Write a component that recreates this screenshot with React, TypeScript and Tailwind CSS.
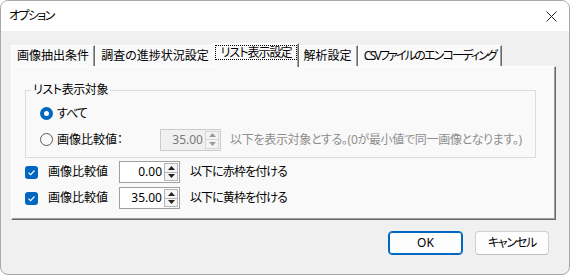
import React from "react";

const Tri = ({ up, color = "#000" }: { up: boolean; color?: string }) => (
  <svg width="7" height="4" viewBox="0 0 7 4">
    {up ? <polygon points="0,4 7,4 3.5,0" fill={color} /> : <polygon points="0,0 7,0 3.5,4" fill={color} />}
  </svg>
);

function Spin({ value, disabled }: { value: string; disabled?: boolean }) {
  return (
    <div
      className={`w-[61px] h-[22px] border flex items-center ${
        disabled ? "bg-[#f0f0f0] border-[#cccccc] text-[#7a7a7a]" : "bg-white border-[#a0a0a0] text-black"
      }`}
    >
      <span className="flex-1 text-right pr-[2px] leading-none">{value}</span>
      <div
        className={`flex flex-col w-[14px] h-[18px] mr-[1px] border ${
          disabled ? "border-[#d6d6d6]" : "border-[#b4b4b4]"
        }`}
      >
        <div className={`flex-1 flex items-center justify-center border-b ${disabled ? "border-[#d6d6d6] bg-[#f3f3f3]" : "border-[#b4b4b4] bg-[#f5f5f5]"}`}>
          <Tri up color={disabled ? "#9a9a9a" : "#222"} />
        </div>
        <div className={`flex-1 flex items-center justify-center ${disabled ? "bg-[#f3f3f3]" : "bg-[#f5f5f5]"}`}>
          <Tri up={false} color={disabled ? "#9a9a9a" : "#222"} />
        </div>
      </div>
    </div>
  );
}

const Check = () => (
  <div className="w-[13px] h-[13px] rounded-[3px] bg-[#0067c0] flex items-center justify-center">
    <svg width="9" height="7" viewBox="0 0 9 7">
      <polyline points="1.5,3.6 3.6,5.6 7.5,1.5" fill="none" stroke="#fff" strokeWidth="1.1" />
    </svg>
  </div>
);

function Tab({ label, w, selected, track = "" }: { label: string; w: number; selected?: boolean; track?: string }) {
  if (selected) {
    return (
      <div
        style={{ width: w }}
        className="relative z-10 h-[24px] -mb-[1px] -mx-[2px] bg-[#f9f9f9] border-l border-t border-white border-r border-r-[#696969] shadow-[inset_-1px_0_0_#a0a0a0] flex items-start justify-center pt-[1px] whitespace-nowrap"
      >
        <span className={`border border-dotted border-black h-[15px] w-[82px] flex items-center justify-center leading-none ${track}`}>{label}</span>
      </div>
    );
  }
  return (
    <div
      style={{ width: w }}
      className={`h-[21px] bg-[#f9f9f9] border-l border-t border-white border-r border-r-[#696969] shadow-[inset_-1px_0_0_#a0a0a0] flex items-center justify-center leading-none pb-[1px] whitespace-nowrap ${track}`}
    >
      {label}
    </div>
  );
}

export default function App() {
  return (
    <div className="w-[570px] h-[275px] bg-[#f0f0f0] border border-[#a8a8a8] rounded-[8px] overflow-hidden flex flex-col text-[12px] text-black font-['Noto_Sans','Noto_Sans_CJK_JP',sans-serif] [font-feature-settings:'palt']">
      <div className="h-[30px] bg-white flex items-center justify-between pl-[8px] pr-[12px] shrink-0">
        <span className="leading-none tracking-[-1.6px]">オプション</span>
        <svg width="11" height="11" viewBox="0 0 11 11">
          <line x1="0.5" y1="0.5" x2="10.5" y2="10.5" stroke="#222" strokeWidth="1" />
          <line x1="10.5" y1="0.5" x2="0.5" y2="10.5" stroke="#222" strokeWidth="1" />
        </svg>
      </div>
      <div className="pl-[10px] pt-[12px]">
        <div className="flex items-end h-[23px]">
          <Tab label="画像抽出条件" w={84} />
          <Tab label="調査の進捗状況設定" w={120} />
          <Tab label="リスト表示設定" w={86} selected track="tracking-[-1px]" />
          <Tab label="解析設定" w={61} />
          <Tab label="CSVファイルのエンコーディング" w={144} track="tracking-[-1.8px]" />
        </div>
        <div className="w-[545px] h-[154px] bg-[#f9f9f9] border-l border-t border-white border-r border-b border-r-[#696969] border-b-[#696969] shadow-[inset_-1px_-1px_0_#a0a0a0] pl-[13px] pt-[23px]">
          <div className="relative w-[511px] h-[68px] border border-[#dcdcdc] pl-[14px] pt-[16px] flex flex-col gap-[13px]">
            <span className="absolute left-[5px] -top-[7px] px-[2px] bg-[#f9f9f9] leading-none tracking-[-0.4px]">リスト表示対象</span>
            <div className="flex items-center h-[13px]">
              <div className="w-[13px] h-[13px] rounded-full bg-[#0067c0] flex items-center justify-center">
                <div className="w-[5px] h-[5px] rounded-full bg-white" />
              </div>
              <span className="ml-[4px] leading-none tracking-[-1px]">すべて</span>
            </div>
            <div className="flex items-center h-[13px]">
              <div className="w-[13px] h-[13px] rounded-full border border-[#5a5a5a] bg-[#f9f9f9]" />
              <span className="ml-[4px] w-[103px] leading-none">画像比較値：</span>
              <Spin value="35.00" disabled />
              <span className="ml-[9px] leading-none text-[#8e8e8e] tracking-[-0.3px] whitespace-nowrap">以下を表示対象とする。(0が最小値で同一画像となります。)</span>
            </div>
          </div>
          <div className="flex flex-col gap-[4px] mt-[3px]">
            {[
              ["0.00", "以下に赤枠を付ける"],
              ["35.00", "以下に黄枠を付ける"],
            ].map(([v, t]) => (
              <div key={t} className="flex items-center h-[22px]">
                <Check />
                <span className="ml-[10px] w-[71px] leading-none">画像比較値</span>
                <Spin value={v} />
                <span className="ml-[10px] leading-none tracking-[-0.9px]">{t}</span>
              </div>
            ))}
          </div>
        </div>
      </div>
      <div className="flex justify-end gap-[12px] pr-[20px] mt-[11px]">
        <button className="w-[75px] h-[24px] rounded-[4px] border border-[#0067c0] shadow-[inset_0_0_0_1px_#0067c0] bg-[#fdfdfd] flex items-center justify-center leading-none">
          OK
        </button>
        <button className="w-[74px] h-[24px] rounded-[4px] border border-[#d0d0d0] border-b-[#bdbdbd] bg-[#fdfdfd] flex items-center justify-center leading-none tracking-[-1.2px]">
          キャンセル
        </button>
      </div>
    </div>
  );
}
